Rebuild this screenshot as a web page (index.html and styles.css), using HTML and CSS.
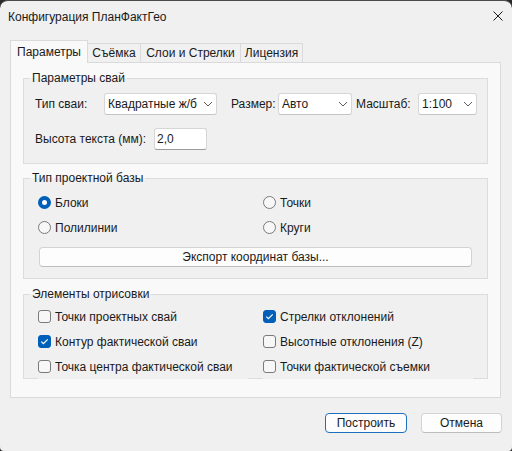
FILE: index.html
```html
<!DOCTYPE html>
<html lang="ru">
<head>
<meta charset="utf-8">
<title>Конфигурация ПланФактГео</title>
<link rel="stylesheet" href="styles.css">
</head>
<body>
<div class="window">
  <div class="titlebar">
    <span class="title">Конфигурация ПланФактГео</span>
    <svg class="close" width="10" height="10" viewBox="0 0 10 10"><path d="M0.5 0.5 L9.5 9.5 M9.5 0.5 L0.5 9.5" stroke="#1a1a1a" stroke-width="1" fill="none"/></svg>
  </div>
  <div class="tabs">
    <div class="tab active t1">Параметры</div>
    <div class="tab t2">Съёмка</div>
    <div class="tab t3">Слои и Стрелки</div>
    <div class="tab t4">Лицензия</div>
  </div>
  <div class="panel">
    <fieldset class="group g1">
      <legend>Параметры свай</legend>
      <div class="body1">
        <div class="row">
          <span class="lbl l-type">Тип сваи:</span>
          <div class="select s-type"><span>Квадратные ж/б</span><svg class="chev" width="10" height="6" viewBox="0 0 10 6"><path d="M1 1 L5 5 L9 1" stroke="#5c5c5c" fill="none"/></svg></div>
          <span class="lbl l-size">Размер:</span>
          <div class="select s-size"><span>Авто</span><svg class="chev" width="10" height="6" viewBox="0 0 10 6"><path d="M1 1 L5 5 L9 1" stroke="#5c5c5c" fill="none"/></svg></div>
          <span class="lbl l-scale">Масштаб:</span>
          <div class="select s-scale"><span>1:100</span><svg class="chev" width="10" height="6" viewBox="0 0 10 6"><path d="M1 1 L5 5 L9 1" stroke="#5c5c5c" fill="none"/></svg></div>
        </div>
        <div class="row r2">
          <span class="lbl l-height">Высота текста (мм):</span>
          <div class="input">2,0</div>
        </div>
      </div>
    </fieldset>
    <fieldset class="group g2">
      <legend>Тип проектной базы</legend>
      <div class="body2">
        <div class="opts">
          <div class="opt"><span class="radio on"></span>Блоки</div>
          <div class="opt"><span class="radio"></span>Точки</div>
          <div class="opt"><span class="radio"></span>Полилинии</div>
          <div class="opt"><span class="radio"></span>Круги</div>
        </div>
        <button class="btn export">Экспорт координат базы...</button>
      </div>
    </fieldset>
    <fieldset class="group g3">
      <legend>Элементы отрисовки</legend>
      <div class="body3">
        <div class="checks">
          <div class="item"><span class="check"></span>Точки проектных свай</div>
          <div class="item"><span class="check on"><svg width="11" height="11" viewBox="0 0 11 11"><path d="M2.3 5.6 L4.4 7.7 L8.7 3.3" stroke="#fff" stroke-width="1.2" fill="none"/></svg></span>Стрелки отклонений</div>
          <div class="item"><span class="check on"><svg width="11" height="11" viewBox="0 0 11 11"><path d="M2.3 5.6 L4.4 7.7 L8.7 3.3" stroke="#fff" stroke-width="1.2" fill="none"/></svg></span>Контур фактической сваи</div>
          <div class="item"><span class="check"></span>Высотные отклонения (Z)</div>
          <div class="item"><span class="check"></span>Точка центра фактической сваи</div>
          <div class="item"><span class="check"></span>Точки фактической съемки</div>
        </div>
      </div>
    </fieldset>
  </div>
  <div class="footer">
    <button class="btn fbtn default">Построить</button>
    <button class="btn fbtn cancel">Отмена</button>
  </div>
</div>
</body>
</html>
```

FILE: styles.css
```css
* { box-sizing: border-box; }
html, body { margin: 0; padding: 0; background: #2b2b2b; }
body {
  font-family: "Liberation Sans", Arial, sans-serif;
  font-size: 12px;
  color: #1a1a1a;
}
.window {
  width: 512px;
  height: 451px;
  background: #f0f0f0;
  border-top: 1px solid #4a4a4a;
  border-radius: 8px 8px 4px 4px;
  overflow: hidden;
}
.titlebar {
  height: 31px;
  display: flex;
  align-items: center;
  padding: 0 9px 0 8px;
}
.close { margin-left: auto; margin-top: -2px; }

.tabs {
  display: flex;
  align-items: flex-end;
  height: 22px;
  margin: 8px 0 0 10px;
}
.tab {
  height: 19px;
  line-height: 18px;
  border: 1px solid #dadada;
  border-bottom: none;
  margin-left: -1px;
  text-align: center;
  background: #f0f0f0;
  white-space: nowrap;
}
.tab.active {
  height: 23px;
  line-height: 22px;
  margin-left: 0;
  margin-bottom: -1px;
  background: #f9f9f9;
  position: relative;
  z-index: 1;
}
.t1 { width: 78px; }
.t2 { width: 54px; }
.t3 { width: 101px; }
.t4 { width: 63px; }

.panel {
  width: 491px;
  height: 336px;
  margin-left: 10px;
  border: 1px solid #dadada;
  background: #f9f9f9;
  padding: 7px 12px 0 12px;
}
.group {
  margin: 0;
  padding: 0;
  min-width: 0;
  border: 1px solid #dcdcdc;
  background: #f0f0f0;
}
.group legend {
  margin-left: 6px;
  padding: 0 2px;
  height: 16px;
  line-height: 16px;
}
.g2 { margin-top: 6px; }
.g3 { margin-top: 7px; }

.body1 { padding: 7px 0 13px 11px; }
.row { display: flex; align-items: center; height: 22px; }
.r2 { margin-top: 13px; }
.lbl { white-space: nowrap; flex: none; }
.l-type { width: 69px; }
.l-size { width: 47px; margin-left: 14px; }
.l-scale { width: 62px; margin-left: 4px; }
.l-height { width: 119px; }
.select {
  flex: none;
  display: flex;
  align-items: center;
  height: 22px;
  background: #ffffff;
  border: 1px solid #d6d6d6;
  border-bottom-color: #c4c4c4;
  border-radius: 3px;
  padding: 0 3px 0 3px;
  white-space: nowrap;
}
.select .chev { margin-left: auto; flex: none; }
.s-type { width: 113px; }
.s-size { width: 74px; }
.s-scale { width: 59px; }
.input {
  width: 53px;
  height: 22px;
  line-height: 20px;
  background: #ffffff;
  border: 1px solid #d6d6d6;
  border-bottom-color: #9a9a9a;
  border-radius: 3px;
  padding-left: 2px;
}

.body2 { padding: 4px 15px 11px 14px; }
.opts {
  display: grid;
  grid-template-columns: 225px 1fr;
  grid-auto-rows: 25px;
}
.opt { display: flex; align-items: center; gap: 4px; }
.radio {
  flex: none;
  width: 13px;
  height: 13px;
  border-radius: 50%;
  border: 1px solid #7a7a7a;
  background: #f7f7f7;
}
.radio.on { background: #ffffff; border: 4px solid #005fb8; }

.btn {
  font: inherit;
  color: #1a1a1a;
  background: #fdfdfd;
  border: 1px solid #d3d3d3;
  border-bottom-color: #bdbdbd;
  border-radius: 4px;
  padding: 0;
  height: 20px;
  display: block;
}
.export { width: 433px; margin: 7px 0 0 1px; }

.body3 { padding: 2px 0 0 14px; }
.checks {
  display: grid;
  grid-template-columns: 225px 210px;
  grid-auto-rows: 25px;
  margin-bottom: -1px;
}
.item {
  display: flex;
  align-items: center;
  gap: 4px;
  width: 210px;
  background: #f0f0f0;
  white-space: nowrap;
}
.check {
  flex: none;
  width: 13px;
  height: 13px;
  border-radius: 3px;
  border: 1px solid #7a7a7a;
  background: #f7f7f7;
  display: flex;
  align-items: center;
  justify-content: center;
}
.check.on { background: #005fb8; border-color: #005fb8; }

.footer {
  display: flex;
  justify-content: flex-end;
  gap: 14px;
  padding-right: 10px;
  margin-top: 15px;
}
.default { width: 82px; border-color: #1f6fc0; }
.cancel { width: 81px; }
```
